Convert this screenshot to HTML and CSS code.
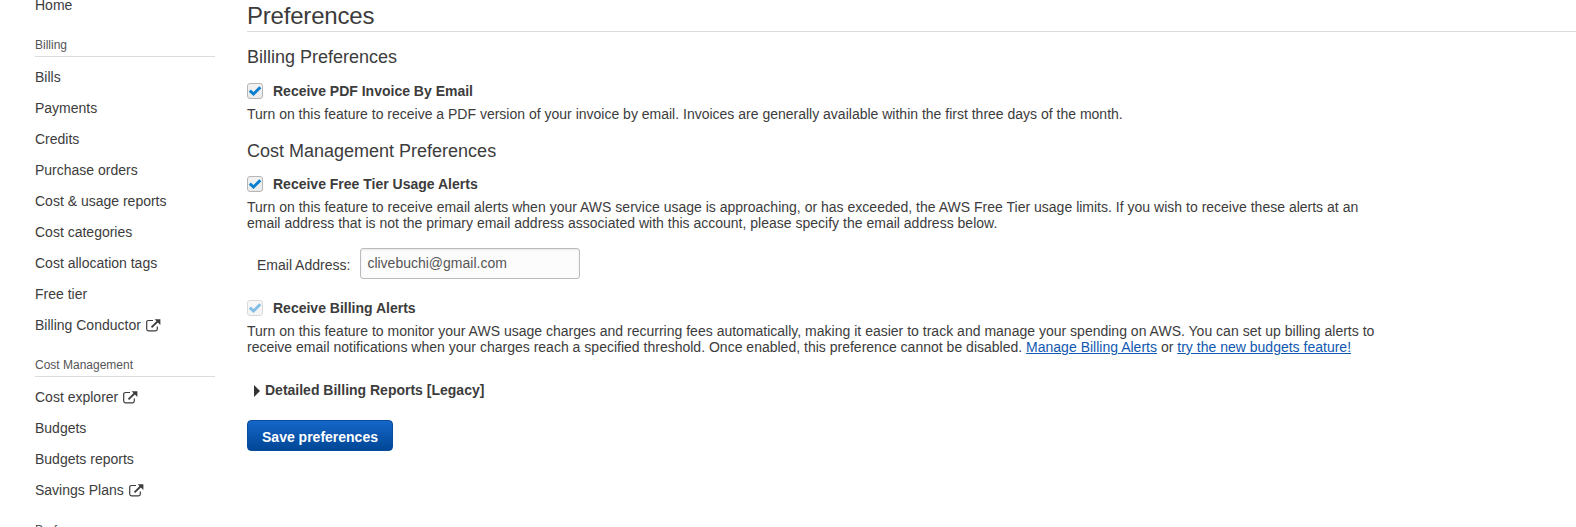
FILE: index.html
```html
<!DOCTYPE html>
<html lang="en">
<head>
<meta charset="utf-8">
<title>Preferences</title>
<link rel="stylesheet" href="styles.css">
</head>
<body>
<svg class="defs" width="0" height="0">
  <symbol id="external" viewBox="0 0 15 13">
    <path d="M7 1.5H2.5Q.7 1.5.7 3.3V10Q.7 11.8 2.5 11.8H9.5Q11.3 11.8 11.3 10V7.5" fill="none" stroke="currentColor" stroke-width="1.2"/>
    <path d="M5.5 8.3L12 2" fill="none" stroke="currentColor" stroke-width="1.8"/>
    <path d="M8.6 .2H14.4V6Z" fill="currentColor"/>
  </symbol>
  <symbol id="check" viewBox="0 0 16 16">
    <path d="M2.8 7.7L6.5 11L13.3 4.2" fill="none" stroke="#0a7fd0" stroke-width="3"/>
  </symbol>
</svg>
<div class="layout">
  <nav class="sidebar">
    <a class="item">Home</a>
    <h4 class="group">Billing</h4>
    <a class="item">Bills</a>
    <a class="item">Payments</a>
    <a class="item">Credits</a>
    <a class="item">Purchase orders</a>
    <a class="item">Cost &amp; usage reports</a>
    <a class="item">Cost categories</a>
    <a class="item">Cost allocation tags</a>
    <a class="item">Free tier</a>
    <a class="item">Billing Conductor<svg class="ext"><use href="#external"/></svg></a>
    <h4 class="group">Cost Management</h4>
    <a class="item">Cost explorer<svg class="ext"><use href="#external"/></svg></a>
    <a class="item">Budgets</a>
    <a class="item">Budgets reports</a>
    <a class="item">Savings Plans<svg class="ext"><use href="#external"/></svg></a>
    <h4 class="group">Preferences</h4>
  </nav>
  <main class="main">
    <h1 class="title">Preferences</h1>
    <h2 class="section">Billing Preferences</h2>
    <div class="option"><span class="box"><svg class="tick"><use href="#check"/></svg></span><span class="label">Receive PDF Invoice By Email</span></div>
    <p class="text">Turn on this feature to receive a PDF version of your invoice by email. Invoices are generally available within the first three days of the month.</p>
    <h2 class="section cost">Cost Management Preferences</h2>
    <div class="option"><span class="box"><svg class="tick"><use href="#check"/></svg></span><span class="label">Receive Free Tier Usage Alerts</span></div>
    <p class="text wide">Turn on this feature to receive email alerts when your AWS service usage is approaching, or has exceeded, the AWS Free Tier usage limits. If you wish to receive these alerts at an<br>email address that is not the primary email address associated with this account, please specify the email address below.</p>
    <div class="field"><span class="field-label">Email Address:</span><span class="input">clivebuchi@gmail.com</span></div>
    <div class="option"><span class="box disabled"><svg class="tick"><use href="#check"/></svg></span><span class="label">Receive Billing Alerts</span></div>
    <p class="text wide">Turn on this feature to monitor your AWS usage charges and recurring fees automatically, making it easier to track and manage your spending on AWS. You can set up billing alerts to<br>receive email notifications when your charges reach a specified threshold. Once enabled, this preference cannot be disabled. <a class="link">Manage Billing Alerts</a> or <a class="link">try the new budgets feature!</a></p>
    <div class="expander"><span class="arrow"></span><span class="label">Detailed Billing Reports [Legacy]</span></div>
    <button class="save">Save preferences</button>
  </main>
</div>
</body>
</html>
```
FILE: styles.css
```css
* { box-sizing: border-box; }
body { margin: 0; height: 527px; overflow: hidden; background: #fff; color: #3c3c3c; font: 14px/16px "Liberation Sans", Arial, sans-serif; }
.defs { display: block; }
.layout { display: flex; height: 527px; overflow: hidden; }
.sidebar { margin: -11px 32px 0 35px; width: 180px; flex: none; }
.item { display: flex; align-items: center; height: 31px; white-space: nowrap; }
.ext { width: 15px; height: 13px; margin: 2px 0 0 5px; }
.group { margin: 0 0 4px; height: 37px; padding-top: 18px; border-bottom: 1px solid #dcdcdc; font-size: 12px; line-height: 14px; font-weight: normal; color: #555; }
.main { flex: 1; white-space: nowrap; }
.title { margin: 0; height: 32px; padding-top: 2px; border-bottom: 1px solid #dcdcdc; font-size: 24px; line-height: 28px; font-weight: normal; letter-spacing: -.2px; }
.section { margin: 15px 0 0; font-size: 18px; line-height: 20px; font-weight: normal; }
.section.cost { margin-top: 19px; }
.option { display: flex; align-items: center; gap: 10px; height: 16px; margin-top: 16px; }
.section.cost + .option { margin-top: 15px; }
.box { display: flex; width: 16px; height: 16px; border: 1px solid #b5b5b5; border-radius: 3px; background: linear-gradient(#f2f2f2, #ebebeb); }
.disabled { opacity: .5; }
.tick { width: 16px; height: 16px; margin: -1px; flex: none; }
.label { font-weight: bold; }
.text { margin: 7px 0 0; }
.wide { word-spacing: .05px; }
.field { display: flex; align-items: center; margin: 17px 0 0 10px; height: 31px; gap: 10px; }
.field-label { padding-top: 3px; }
.input { width: 220px; height: 31px; padding: 6px; border: 1px solid #bbb; border-radius: 3px; background: #fcfcfc; color: #555; box-shadow: inset 0 1px 2px #e8e8e8; }
.field + .option { margin-top: 21px; }
.link { color: #1158b0; text-decoration: underline; }
.expander { display: flex; align-items: center; gap: 5px; margin: 27px 0 0 7px; }
.arrow { border: solid transparent; border-width: 6px 0 6px 6px; border-left-color: #333; margin-top: 2px; }
.save { display: block; width: 146px; height: 31px; margin-top: 22px; padding: 2px 0 0; border: 1px solid #0a4c9c; border-radius: 4px; background: linear-gradient(#1466c8, #004796); color: #fff; font: bold 14px/16px "Liberation Sans", Arial, sans-serif; }
```
